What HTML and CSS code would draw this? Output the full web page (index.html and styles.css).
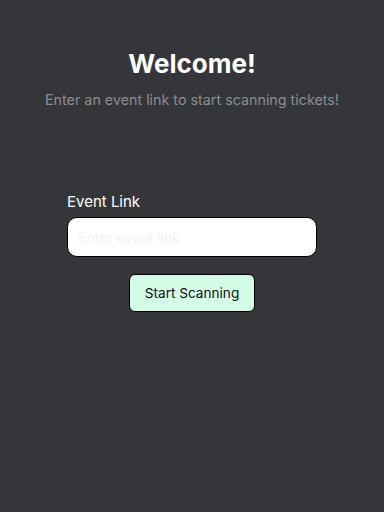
FILE: index.html
```html
<!DOCTYPE html>
<html>
<head>
<meta charset="utf-8">
<link rel="stylesheet" href="styles.css">
</head>
<body>
<main class="page">
  <header class="hero">
    <h1 class="title">Welcome!</h1>
    <p class="subtitle">Enter an event link to start scanning tickets!</p>
  </header>
  <form class="form">
    <label class="label" for="link">Event Link</label>
    <input class="input" id="link" type="text" placeholder="Enter event link">
    <button class="button" type="button">Start Scanning</button>
  </form>
</main>
</body>
</html>
```
FILE: styles.css
```css
html, body {
  margin: 0;
  padding: 0;
  background: #35363a;
  height: 100%;
}
body {
  font-family: Inter, "Noto Sans", sans-serif;
}
.page {
  display: flex;
  flex-direction: column;
  align-items: center;
  padding-top: 48px;
}
.hero {
  display: flex;
  flex-direction: column;
  align-items: center;
}
.title {
  margin: 0;
  color: #ffffff;
  font-size: 26px;
  font-weight: 700;
  line-height: 32px;
}
.subtitle {
  margin: 10px 0 0;
  color: #8c8c90;
  font-size: 14.3px;
  line-height: 20px;
}
.form {
  margin-top: 82px;
  width: 250px;
  display: flex;
  flex-direction: column;
  align-items: stretch;
}
.label {
  color: #ffffff;
  font-size: 15px;
  line-height: 20px;
  margin-bottom: 5px;
}
.input {
  box-sizing: border-box;
  height: 40px;
  border: 1px solid #000;
  border-radius: 10px;
  background: #fff;
  padding: 0 10px;
  font-family: inherit;
  font-size: 14px;
  outline: none;
}
.input::placeholder {
  color: #f2f2f2;
}
.button {
  align-self: center;
  margin-top: 17px;
  box-sizing: border-box;
  width: 126px;
  height: 38px;
  border: 1px solid #000;
  border-radius: 6px;
  background: #d3fde6;
  color: #111;
  font-family: inherit;
  font-size: 13.6px;
  padding: 0;
}
```
